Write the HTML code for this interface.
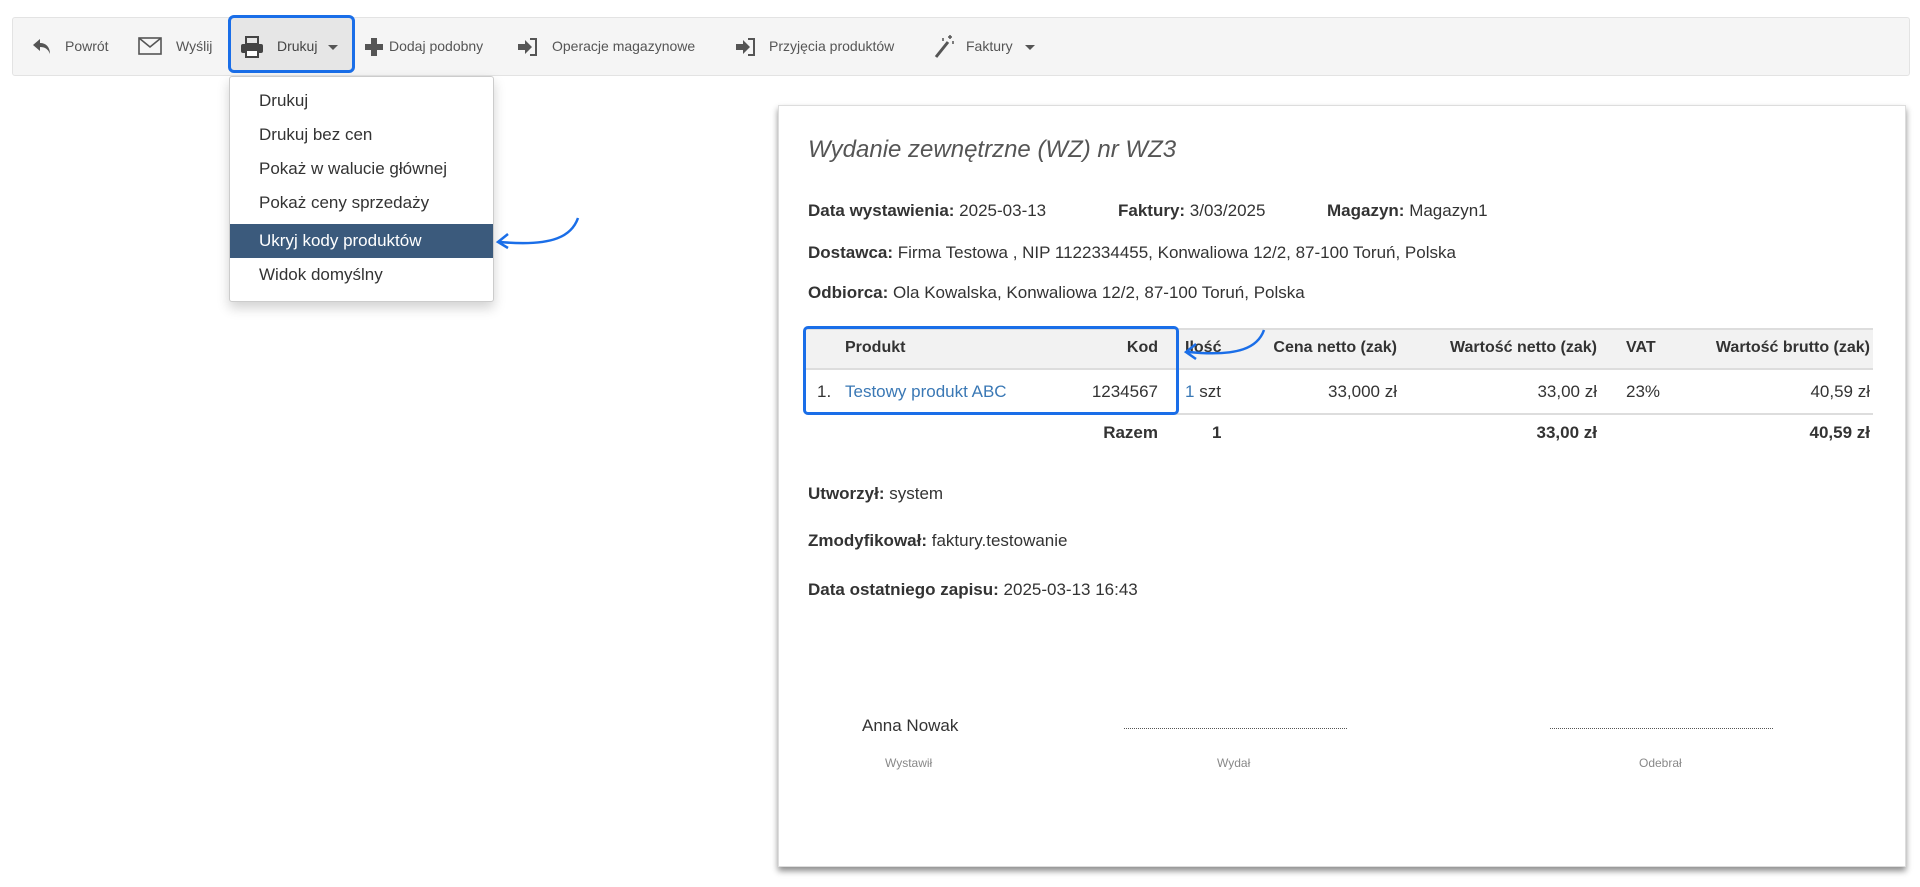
<!DOCTYPE html>
<html><head><meta charset="utf-8"><style>
body{margin:0;width:1920px;height:887px;background:#fff;font-family:"Liberation Sans",Arial,sans-serif;position:relative;overflow:hidden;color:#333}
.a{position:absolute;white-space:nowrap}
.tb{position:absolute;left:12px;top:17px;width:1896px;height:57px;background:#f5f5f5;border:1px solid #e3e3e3;border-radius:3px}
.ti{font-size:14px;color:#555;top:38px}
.dd{position:absolute;left:229px;top:76px;width:263px;height:224px;background:#fff;border:1px solid #ccc;border-radius:3px;box-shadow:0 6px 12px rgba(0,0,0,.18)}
.di{position:absolute;left:0;width:263px;height:34px;line-height:34px;padding-left:29px;box-sizing:border-box;font-size:17px;color:#333}
.paper{position:absolute;left:778px;top:105px;width:1126px;height:760px;background:#fff;border:1px solid #ddd;box-shadow:0 4px 6px rgba(0,0,0,.45)}
.t{font-size:17px;color:#333}
b{font-weight:bold}
.th{font-size:16px;font-weight:bold;color:#333;top:339px}
.r1{font-size:17px;color:#333;top:382px}
.r2{font-size:17px;font-weight:bold;color:#333;top:423px}
.rt{text-align:right}
.bl{color:#3a78b5}
</style></head><body>
<div class="tb"></div>
<div class="a" style="left:228px;top:15px;width:127px;height:58px;background:#e6e6e6;border:3px solid #1a6ee8;border-radius:6px;box-sizing:border-box"></div>
<svg class="a" style="left:32px;top:37px" width="20" height="18" viewBox="0 0 20 18"><path d="M8 2 L1 8 L8 14 V10 C13 10 16 12 18 17 C18 10 14 6 8 6 Z" fill="#555"/></svg>
<div class="a ti" style="left:65px">Powrót</div>
<svg class="a" style="left:138px;top:37px" width="24" height="18"><rect x="1" y="1" width="22" height="16" fill="none" stroke="#555" stroke-width="1.6"/><path d="M1 1 L12 10 L23 1" fill="none" stroke="#555" stroke-width="1.6"/></svg>
<div class="a ti" style="left:176px">Wyślij</div>
<svg class="a" style="left:240px;top:36px" width="24" height="22"><rect x="6" y="1" width="12" height="7" fill="none" stroke="#444" stroke-width="2"/><rect x="1" y="8" width="22" height="9" rx="2" fill="#444"/><rect x="6" y="14" width="12" height="7" fill="#fff" stroke="#444" stroke-width="2"/></svg>
<div class="a ti" style="left:277px;color:#444">Drukuj</div>
<div class="a" style="left:328px;top:45px;border-left:5px solid transparent;border-right:5px solid transparent;border-top:5px solid #555"></div>
<svg class="a" style="left:365px;top:38px" width="18" height="18"><path d="M6 0h6v6h6v6h-6v6h-6v-6h-6v-6h6z" fill="#555"/></svg>
<div class="a ti" style="left:389px">Dodaj podobny</div>
<svg class="a" style="left:517px;top:37px" width="22" height="20"><path d="M1 7h7V3l7 7-7 7v-4H1z" fill="#555"/><path d="M13 2h6v16h-6" fill="none" stroke="#555" stroke-width="2"/></svg>
<div class="a ti" style="left:552px">Operacje magazynowe</div>
<svg class="a" style="left:735px;top:37px" width="22" height="20"><path d="M1 7h7V3l7 7-7 7v-4H1z" fill="#555"/><path d="M13 2h6v16h-6" fill="none" stroke="#555" stroke-width="2"/></svg>
<div class="a ti" style="left:769px">Przyjęcia produktów</div>
<svg class="a" style="left:933px;top:34px" width="22" height="24"><path d="M3 23 L15 8" stroke="#555" stroke-width="3"/><path d="M17 1v4M15 3h4M20 7v3M10 4v3" stroke="#555" stroke-width="1.5"/></svg>
<div class="a ti" style="left:966px">Faktury</div>
<div class="a" style="left:1025px;top:45px;border-left:5px solid transparent;border-right:5px solid transparent;border-top:5px solid #555"></div>

<div class="dd">
<div class="di" style="top:7px">Drukuj</div>
<div class="di" style="top:41px">Drukuj bez cen</div>
<div class="di" style="top:75px">Pokaż w walucie głównej</div>
<div class="di" style="top:109px">Pokaż ceny sprzedaży</div>
<div class="di" style="top:147px;background:#3b5a7c;color:#fff">Ukryj kody produktów</div>
<div class="di" style="top:181px">Widok domyślny</div>
</div>
<svg class="a" style="left:490px;top:215px" width="95" height="35"><path d="M88 3 C82 20 65 32 10 27" fill="none" stroke="#1a6ee8" stroke-width="2.5"/><path d="M18 19 L8 27 L18 33" fill="none" stroke="#1a6ee8" stroke-width="2.5"/></svg>

<div class="paper"></div>
<div class="a" style="left:808px;top:136px;font-size:24px;font-style:italic;color:#555">Wydanie zewnętrzne (WZ) nr WZ3</div>
<div class="a t" style="left:808px;top:201px"><b>Data wystawienia:</b> 2025-03-13</div>
<div class="a t" style="left:1118px;top:201px"><b>Faktury:</b> 3/03/2025</div>
<div class="a t" style="left:1327px;top:201px"><b>Magazyn:</b> Magazyn1</div>
<div class="a t" style="left:808px;top:243px"><b>Dostawca:</b> Firma Testowa , NIP 1122334455, Konwaliowa 12/2, 87-100 Toruń, Polska</div>
<div class="a t" style="left:808px;top:283px"><b>Odbiorca:</b> Ola Kowalska, Konwaliowa 12/2, 87-100 Toruń, Polska</div>

<div class="a" style="left:806px;top:328px;width:1067px;height:42px;background:#f2f2f2;border-top:2px solid #ddd;border-bottom:2px solid #ddd;box-sizing:border-box"></div>
<div class="a" style="left:806px;top:413px;width:1067px;height:2px;background:#ddd"></div>
<div class="a th" style="left:845px">Produkt</div>
<div class="a th rt" style="right:762px">Kod</div>
<div class="a th" style="left:1185px">Ilość</div>
<div class="a th rt" style="right:523px">Cena netto (zak)</div>
<div class="a th rt" style="right:323px">Wartość netto (zak)</div>
<div class="a th" style="left:1626px">VAT</div>
<div class="a th rt" style="right:50px">Wartość brutto (zak)</div>
<div class="a r1" style="left:817px">1.</div>
<div class="a r1 bl" style="left:845px">Testowy produkt ABC</div>
<div class="a r1 rt" style="right:762px">1234567</div>
<div class="a r1" style="left:1185px"><span class="bl">1</span> szt</div>
<div class="a r1 rt" style="right:523px">33,000 zł</div>
<div class="a r1 rt" style="right:323px">33,00 zł</div>
<div class="a r1" style="left:1626px">23%</div>
<div class="a r1 rt" style="right:50px">40,59 zł</div>
<div class="a r2 rt" style="right:762px">Razem</div>
<div class="a r2" style="left:1212px">1</div>
<div class="a r2 rt" style="right:323px">33,00 zł</div>
<div class="a r2 rt" style="right:50px">40,59 zł</div>
<div class="a" style="left:803px;top:326px;width:376px;height:89px;border:3px solid #1a6ee8;border-radius:5px;box-sizing:border-box"></div>
<svg class="a" style="left:1180px;top:327px" width="90" height="35"><path d="M84 3 C78 20 60 30 8 25" fill="none" stroke="#1a6ee8" stroke-width="2.5"/><path d="M16 17 L6 25 L16 32" fill="none" stroke="#1a6ee8" stroke-width="2.5"/></svg>

<div class="a t" style="left:808px;top:484px"><b>Utworzył:</b> system</div>
<div class="a t" style="left:808px;top:531px"><b>Zmodyfikował:</b> faktury.testowanie</div>
<div class="a t" style="left:808px;top:580px"><b>Data ostatniego zapisu:</b> 2025-03-13 16:43</div>

<div class="a" style="left:862px;top:716px;font-size:17px;color:#333">Anna Nowak</div>
<div class="a" style="left:1124px;top:728px;width:223px;border-top:1.5px dotted #555"></div>
<div class="a" style="left:1550px;top:728px;width:223px;border-top:1.5px dotted #555"></div>
<div class="a" style="left:885px;top:756px;font-size:12px;color:#888">Wystawił</div>
<div class="a" style="left:1217px;top:756px;font-size:12px;color:#888">Wydał</div>
<div class="a" style="left:1639px;top:756px;font-size:12px;color:#888">Odebrał</div>
</body></html>
